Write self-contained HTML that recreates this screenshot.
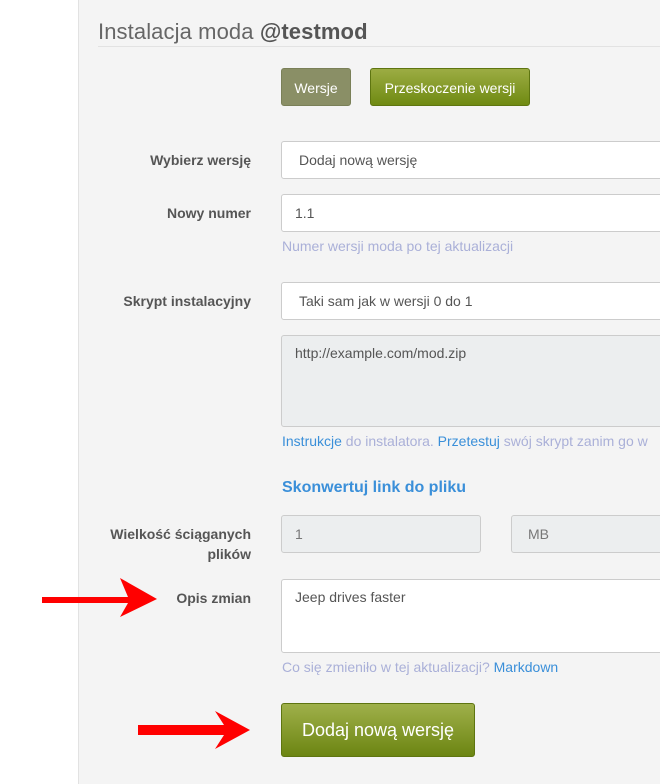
<!DOCTYPE html>
<html><head><meta charset="utf-8"><style>
*{box-sizing:border-box;margin:0;padding:0}
body{width:660px;height:784px;overflow:hidden;background:#fff;font-family:"Liberation Sans",sans-serif;position:relative}
.main{position:absolute;left:78px;top:0;width:600px;height:784px;background:#f4f4f4;border-left:1px solid #e2e2e2}
.a{position:absolute}
h1{position:absolute;left:98px;top:19px;font-size:22px;font-weight:normal;color:#666;letter-spacing:0.1px}
h1 b{color:#555}
.hr{position:absolute;left:98px;top:46px;width:580px;border-top:1px solid #e2e2e2}
.btn{position:absolute;border-radius:3px;color:#fff;font-size:14px;text-align:center}
.lbl{position:absolute;right:409px;font-size:14px;font-weight:bold;color:#555;text-align:right;line-height:20px}
.inp{position:absolute;left:281px;width:400px;background:#fff;border:1px solid #ccc;border-radius:3px;font-size:14px;color:#555;padding-left:13px}
.help{position:absolute;left:282px;font-size:14px;color:#aab0d8}
.lnk{color:#3a8fd9}
</style></head><body>
<div class="main"></div>
<h1>Instalacja moda <b>@testmod</b></h1>
<div class="hr"></div>
<div class="btn" style="left:281px;top:68px;width:70px;height:38px;line-height:38px;background:#8a8f66;border:1px solid #7a8058">Wersje</div>
<div class="btn" style="left:370px;top:68px;width:160px;height:38px;line-height:38px;background:linear-gradient(#9cac43,#6f8a12);border:1px solid #5e7510">Przeskoczenie wersji</div>

<div class="lbl" style="top:150px">Wybierz wersję</div>
<div class="inp" style="top:141px;height:38px;line-height:36px;padding-left:17px">Dodaj nową wersję</div>

<div class="lbl" style="top:203px">Nowy numer</div>
<div class="inp" style="top:194px;height:38px;line-height:36px">1.1</div>
<div class="help" style="top:238px">Numer wersji moda po tej aktualizacji</div>

<div class="lbl" style="top:291px">Skrypt instalacyjny</div>
<div class="inp" style="top:282px;height:38px;line-height:36px;padding-left:17px">Taki sam jak w wersji 0 do 1</div>
<div class="inp" style="top:335px;height:92px;background:#eceeef;padding-top:9px">http://example.com/mod.zip</div>
<div class="help" style="top:433px;color:#aab0d8;white-space:nowrap"><span class="lnk">Instrukcje</span> do instalatora. <span class="lnk">Przetestuj</span> swój skrypt zanim go w</div>

<div class="a" style="left:282px;top:479px;font-size:16px;font-weight:bold;color:#3a8fd9">Skonwertuj link do pliku</div>

<div class="lbl" style="top:524px">Wielkość ściąganych<br>plików</div>
<div class="inp" style="top:515px;width:200px;height:38px;line-height:36px;background:#eceeef;color:#777">1</div>
<div class="inp" style="left:511px;top:515px;width:200px;height:38px;line-height:36px;background:#eceeef;color:#777;padding-left:16px">MB</div>

<div class="lbl" style="top:588px">Opis zmian</div>
<div class="inp" style="top:579px;height:74px;padding-top:9px">Jeep drives faster</div>
<div class="help" style="top:659px">Co się zmieniło w tej aktualizacji? <span class="lnk">Markdown</span></div>

<div class="btn" style="left:281px;top:703px;width:194px;height:54px;line-height:52px;font-size:18px;background:linear-gradient(#9fb04a,#6c8512);border:1px solid #5e7510">Dodaj nową wersję</div>

<svg class="a" style="left:0;top:0" width="660" height="784">
<polygon fill="#ff0000" points="42,597 128,597 120,578 157,599 120,617 128,603 42,603"/>
<polygon fill="#ff0000" points="138,725 224,725 215,711 250,730 215,749 224,735 138,735"/>
</svg>
</body></html>
